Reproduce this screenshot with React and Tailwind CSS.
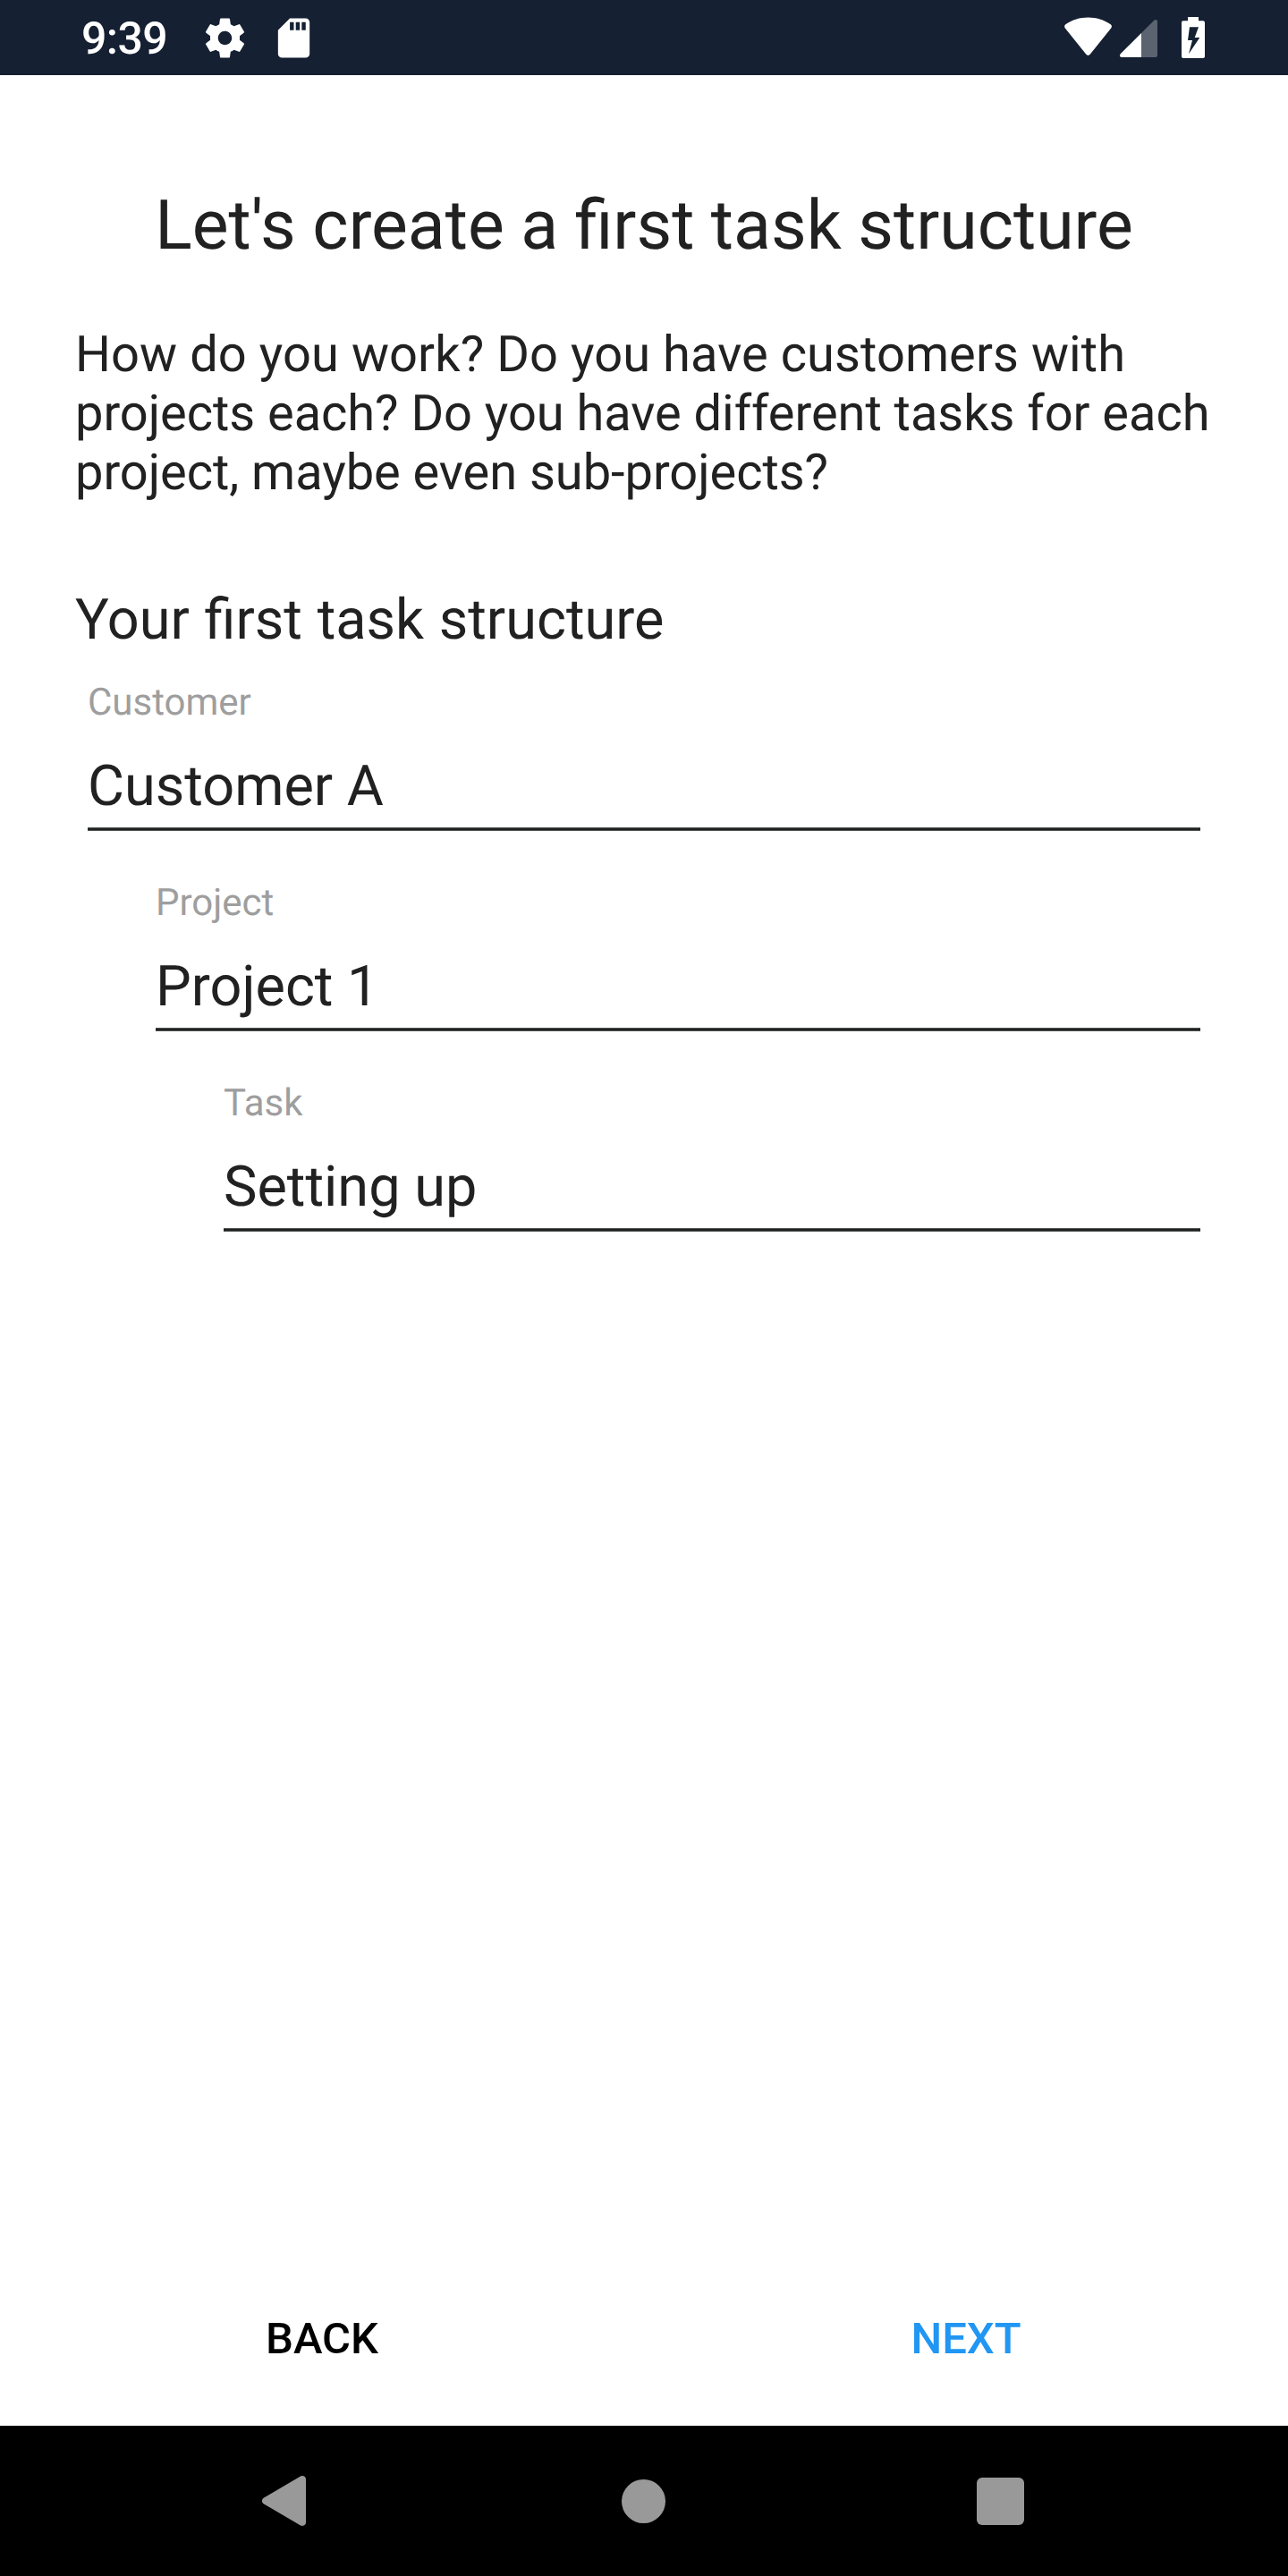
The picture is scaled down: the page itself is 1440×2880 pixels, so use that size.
const fields = [
    { label: 'Customer', value: 'Customer A', indent: 'ml-[98px]' },
    { label: 'Project', value: 'Project 1', indent: 'ml-[174px]' },
    { label: 'Task', value: 'Setting up', indent: 'ml-[250px]' },
]

function StatusBar() {
    return (
        <header className="h-[84px] bg-[#152033] flex items-center justify-between text-white pl-[91px] pr-[93px]">
            <div className="flex items-center">
                <span className="w-[97px] pt-[3px] text-[50px] leading-[60px] font-medium tracking-[-0.6px]">9:39</span>
                <svg className="ml-[37px] size-[53px]" viewBox="0 0 24 24" fill="currentColor">
                    <path d="M19.43 12.98c.04-.32.07-.64.07-.98s-.03-.66-.07-.98l2.11-1.65c.19-.15.24-.42.12-.64l-2-3.46c-.12-.22-.39-.3-.61-.22l-2.49 1c-.52-.4-1.08-.73-1.69-.98l-.38-2.65A.488.488 0 0 0 14 2h-4c-.25 0-.46.18-.49.42l-.38 2.65c-.61.25-1.17.59-1.69.98l-2.49-1c-.23-.09-.49 0-.61.22l-2 3.46c-.13.22-.07.49.12.64l2.11 1.65c-.04.32-.07.65-.07.98s.03.66.07.98l-2.11 1.65c-.19.15-.24.42-.12.64l2 3.46c.12.22.39.3.61.22l2.49-1c.52.4 1.08.73 1.69.98l.38 2.65c.03.24.24.42.49.42h4c.25 0 .46-.18.49-.42l.38-2.65c.61-.25 1.17-.59 1.69-.98l2.49 1c.23.09.49 0 .61-.22l2-3.46c.12-.22.07-.49-.12-.64l-2.11-1.65zM12 15.5c-1.93 0-3.5-1.57-3.5-3.5s1.57-3.5 3.5-3.5 3.5 1.57 3.5 3.5-1.57 3.5-3.5 3.5z" />
                </svg>
                <svg className="ml-[24px] size-[53px]" viewBox="0 0 24 24" fill="currentColor" fillRule="evenodd">
                    <path d="M18 2h-8L4 8v12c0 1.100.9 2 2 2h12c1.100 0 2-.9 2-2V4c0-1.100-.9-2-2-2zM10 4h2v4h-2zM13 4h2v4h-2zM16 4h2v4h-2z" />
                </svg>
            </div>
            <div className="flex items-center">
                {/* wifi */}
                <svg className="w-[54px] h-[84px]" viewBox="0 0 54 84" fill="currentColor">
                    <path d="M.8 31.500C-.3 30-.1 28.400 1.300 27.300C8.500 22.200 17.500 19.500 26.500 19.500s18 2.700 25.200 7.800c1.400 1.100 1.600 2.700.5 4.200L28.700 60.800c-1.200 1.500-3.200 1.500-4.400 0z" />
                </svg>
                {/* cell signal */}
                <svg className="ml-[8px] w-[42px] h-[84px]" viewBox="0 0 42 84" fill="currentColor">
                    <path d="M24 37v27H2C0 64-.7 62 .7 60.300z" />
                    <path opacity=".3" d="M24 37L38.300 22.700C39.700 21.300 42 22 42 24v38c0 1.200-.8 2-2 2H24z" />
                </svg>
                {/* battery charging */}
                <svg className="ml-[27px] w-[26px] h-[84px]" viewBox="0 0 26 84" fill="currentColor" fillRule="evenodd">
                    <path d="M7 19h12v4.300h5c1.200 0 2 .8 2 2V63c0 1.200-.8 2-2 2H2c-1.200 0-2-.8-2-2V25.300c0-1.200.8-2 2-2h5zM9 30.300L7 45h5L8 60.300L20.300 42h-5.600L19 30.300z" />
                </svg>
            </div>
        </header>
    )
}

function Field({ label, value, indent }) {
    return (
        <div className={`${indent} mr-[98px] h-[224px]`}>
            <label className="block text-[42px] leading-[50px] text-[#9e9e9e]">{label}</label>
            <div className="mt-[32px] text-[63px] leading-[74px]">{value}</div>
            <div className="mt-[8px] h-[4px] bg-[#212121] border-y border-[#4d5050]" />
        </div>
    )
}

function NavigationBar() {
    return (
        <footer className="h-[168px] bg-black flex items-center text-[#999999]">
            <svg className="ml-[293px] w-[49px] h-[56px]" viewBox="0 0 49 56" fill="currentColor">
                <path d="M43 .6C46-.8 49 1 49 4v48c0 3-3 4.800-6 3.400L1.700 31.200c-2.300-1.500-2.300-4.900 0-6.400z" />
            </svg>
            <div className="ml-[353px] size-[49px] rounded-full bg-[#999999]" />
            <div className="ml-[348px] size-[53px] rounded-[6px] bg-[#999999]" />
        </footer>
    )
}

export default function App() {
    return (
        <div className="w-[1440px] h-[2880px] flex flex-col bg-white font-['Roboto',sans-serif] text-[#212121] [text-rendering:geometricPrecision]">
            <StatusBar />
            <main className="flex-1">
                <h1 className="mt-[120px] text-center text-[77px] leading-[96px] [word-spacing:-0.6px]">Let's create a first task structure</h1>
                <p className="mt-[63px] ml-[84px] text-[56px] leading-[66px] tracking-[-0.04px]">
                    <span className="tracking-[0.08px]">How do you work? Do you have customers with</span><br />
                    projects each? Do you have different tasks for each<br />
                    project, maybe even sub-projects?
                </p>
                <h2 className="mt-[95px] mb-[29px] ml-[84px] text-[63px] leading-[76px] [word-spacing:1.1px]">Your first task structure</h2>
                {fields.map((field) => (
                    <Field key={field.label} {...field} />
                ))}
            </main>
            <div className="grid grid-cols-2 h-[196px] pt-[2px] text-[49px] leading-[60px] font-medium">
                <button className="text-black">BACK</button>
                <button className="text-[#2196f3]">NEXT</button>
            </div>
            <NavigationBar />
        </div>
    )
}
